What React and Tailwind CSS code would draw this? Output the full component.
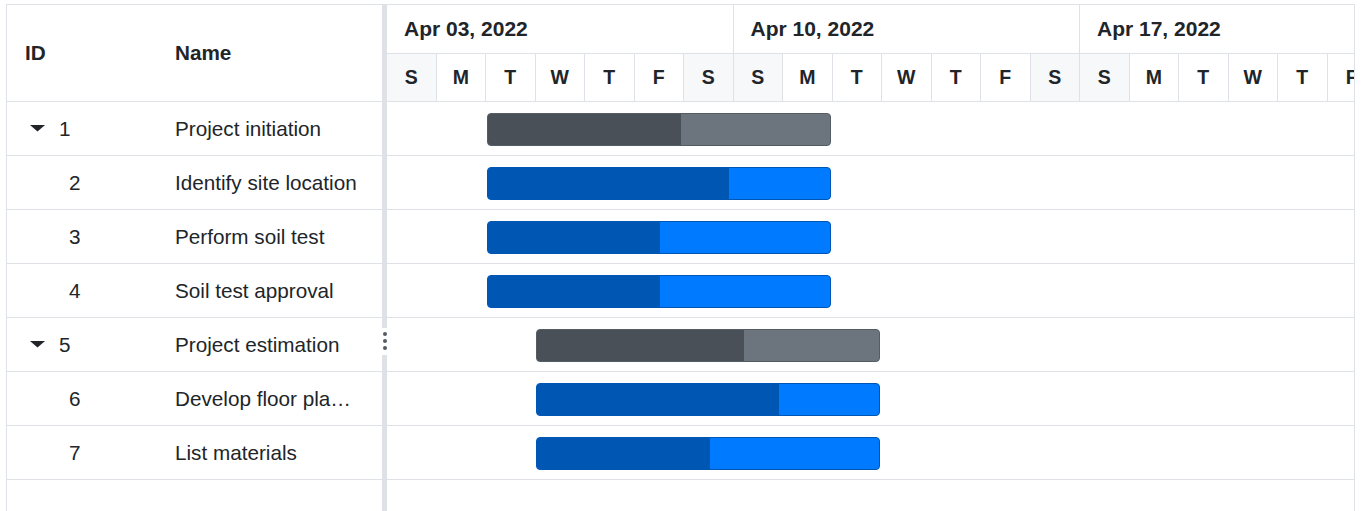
const SEMANAS = ['Apr 03, 2022', 'Apr 10, 2022', 'Apr 17, 2022'];
const LETRAS = ['S', 'M', 'T', 'W', 'T', 'F', 'S'];

const TAREAS = [
  { id: 1, nombre: 'Project initiation', padre: true, inicio: 100, avance: 194 },
  { id: 2, nombre: 'Identify site location', inicio: 100, avance: 242 },
  { id: 3, nombre: 'Perform soil test', inicio: 100, avance: 173 },
  { id: 4, nombre: 'Soil test approval', inicio: 100, avance: 173 },
  { id: 5, nombre: 'Project estimation', padre: true, inicio: 149, avance: 208 },
  { id: 6, nombre: 'Develop floor plan for estimation', inicio: 149, avance: 243 },
  { id: 7, nombre: 'List materials', inicio: 149, avance: 174 },
];

function Caret() {
  return (
    <svg width="15" height="7" viewBox="0 0 15 7" className="shrink-0">
      <polygon points="0,0 15,0 7.5,6.5" fill="#212529" />
    </svg>
  );
}

function FilaGrid({ tarea }) {
  return (
    <div className="flex h-[54px] border-b border-[#dee2e6] items-center">
      <div className="w-[150px] shrink-0 flex items-center">
        {tarea.padre ? (
          <div className="flex items-center pl-[23px] gap-[14px]">
            <Caret />
            <span>{tarea.id}</span>
          </div>
        ) : (
          <span className="pl-[62px]">{tarea.id}</span>
        )}
      </div>
      <div className="flex-1 min-w-0 pl-[18px] pr-[23px] truncate">{tarea.nombre}</div>
    </div>
  );
}

function Barra({ tarea }) {
  const padre = tarea.padre;
  return (
    <div
      className={`absolute top-[11px] h-[33px] w-[344px] rounded-[4px] border overflow-hidden ${
        padre ? 'bg-[#6c757d] border-[#565c64]' : 'bg-[#007bff] border-[#0056b3]'
      }`}
      style={{ left: tarea.inicio }}
    >
      <div
        className={`h-full ${padre ? 'bg-[#4a5058]' : 'bg-[#0056b3]'}`}
        style={{ width: tarea.avance - 1 }}
      />
    </div>
  );
}

function Divisor() {
  return (
    <div className="w-[5px] shrink-0 flex flex-col">
      <div className="h-[323px] bg-[#dee2e6]" />
      <div className="h-[27px] bg-white flex flex-col items-center pt-[4px] gap-[3px]">
        <span className="w-[4px] h-[4px] rounded-full bg-[#555b63]" />
        <span className="w-[4px] h-[4px] rounded-full bg-[#555b63]" />
        <span className="w-[4px] h-[4px] rounded-full bg-[#555b63]" />
      </div>
      <div className="flex-1 bg-[#dee2e6]" />
    </div>
  );
}

export default function App() {
  const dias = SEMANAS.flatMap((s, i) =>
    LETRAS.map((l, j) => ({ l, finDeSemana: j === 0 || j === 6, k: `${i}-${j}` }))
  );

  return (
    <div className="bg-white min-h-screen pt-[4px] pl-[6px] font-['Liberation_Sans',Arial,sans-serif] text-[20.7px] text-[#212529] overflow-hidden">
      <div className="w-[1349px] h-[520px] border border-[#dee2e6] flex overflow-hidden">
        {/* grid */}
        <div className="w-[375px] shrink-0 flex flex-col">
          <div className="flex h-[97px] border-b border-[#dee2e6] items-center font-bold">
            <div className="w-[150px] shrink-0 pl-[18px]">ID</div>
            <div className="flex-1 pl-[18px]">Name</div>
          </div>
          {TAREAS.map((t) => (
            <FilaGrid key={t.id} tarea={t} />
          ))}
        </div>

        <Divisor />

        {/* chart */}
        <div className="flex-1 min-w-0 overflow-hidden flex flex-col">
          <div className="w-[1040px]">
            <div className="flex h-[49px] border-b border-[#dee2e6] font-bold text-[21px]">
              {SEMANAS.map((s) => (
                <div key={s} className="w-[346.5px] shrink-0 border-r border-[#dee2e6] flex items-center pl-[17px]">
                  {s}
                </div>
              ))}
            </div>
            <div className="flex h-[48px] border-b border-[#dee2e6] font-bold text-[19.5px]">
              {dias.map((d) => (
                <div
                  key={d.k}
                  className={`w-[49.5px] shrink-0 border-r border-[#dee2e6] flex items-center justify-center ${
                    d.finDeSemana ? 'bg-[#f7f8fa]' : 'bg-white'
                  }`}
                >
                  {d.l}
                </div>
              ))}
            </div>
          </div>
          {TAREAS.map((t) => (
            <div key={t.id} className="relative h-[54px] border-b border-[#dee2e6]">
              <Barra tarea={t} />
            </div>
          ))}
        </div>
      </div>
    </div>
  );
}
